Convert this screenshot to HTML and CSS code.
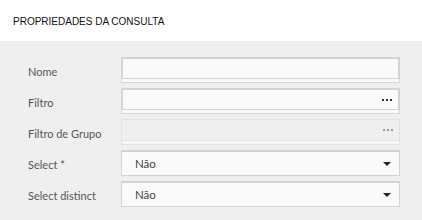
FILE: index.html
```html
<!DOCTYPE html>
<html lang="pt">
<head>
    <meta charset="UTF-8">
    <meta name="viewport" content="width=device-width, initial-scale=1.0">
    <title>Propriedades da Consulta</title>
    <link rel="stylesheet" href="styles.css">
</head>
<body>
    <!-- Cabeçalho do painel -->
    <header class="panel-header">
        <h1 class="panel-title">PROPRIEDADES DA CONSULTA</h1>
    </header>

    <!-- Formulário -->
    <div class="panel-body">
        <div class="form-row">
            <label class="form-label" for="nome">Nome</label>
            <div class="text-box">
                <input class="text-input" id="nome" type="text">
                <div class="text-strip"></div>
            </div>
        </div>

        <div class="form-row">
            <label class="form-label" for="filtro">Filtro</label>
            <div class="text-box">
                <div class="text-input with-dots">
                    <span class="dots"><i></i><i></i><i></i></span>
                </div>
                <div class="text-strip"></div>
            </div>
        </div>

        <div class="form-row">
            <label class="form-label">Filtro de Grupo</label>
            <div class="text-box disabled">
                <div class="text-input with-dots">
                    <span class="dots"><i></i><i></i><i></i></span>
                </div>
                <div class="text-strip"></div>
            </div>
        </div>

        <div class="form-row">
            <label class="form-label">Select *</label>
            <div class="select-box">
                <span class="select-value">Não</span>
                <span class="caret"></span>
            </div>
        </div>

        <div class="form-row">
            <label class="form-label">Select distinct</label>
            <div class="select-box">
                <span class="select-value">Não</span>
                <span class="caret"></span>
            </div>
        </div>
    </div>
</body>
</html>
```

FILE: styles.css
```css
body {
    margin: 0;
    width: 422px;
    height: 220px;
    overflow: hidden;
    background-color: #efefef;
    font-family: Lato, "Open Sans", sans-serif;
}

.panel-header {
    background-color: #fff;
    height: 41px;
    display: flex;
    align-items: center;
    padding: 0 13px;
    box-sizing: border-box;
}

.panel-title {
    margin: 0;
    font-family: "Liberation Sans", Arial, sans-serif;
    font-size: 10px;
    font-weight: normal;
    color: #111;
    padding-top: 1px;
}

.panel-body {
    padding: 16px 22px 0 28px;
    display: flex;
    flex-direction: column;
    gap: 5px;
}

.form-row {
    display: flex;
    align-items: center;
    height: 26px;
}

.form-label {
    width: 93px;
    font-size: 11px;
    color: #555;
    padding-top: 2px;
}

.text-box {
    width: 279px;
    height: 26px;
    display: flex;
    flex-direction: column;
}

.text-input {
    display: block;
    box-sizing: border-box;
    width: 100%;
    height: 22px;
    margin: 0;
    border: 2px solid #d3d3d3;
    border-bottom-width: 1px;
    background-color: #fafafa;
    outline: none;
}

.text-strip {
    height: 3px;
    border: 1px solid #d6d6d6;
    border-top: 0;
    background-color: #fafafa;
}

.with-dots {
    display: flex;
    align-items: center;
    justify-content: flex-end;
    padding-right: 6px;
}

.dots {
    display: flex;
    gap: 2px;
}

.dots i {
    width: 2px;
    height: 2px;
    background-color: #333;
}

.text-box.disabled .text-input {
    border-color: #e2e2e2;
    border-width: 1px;
    background-color: #efefef;
}

.text-box.disabled .text-strip {
    border-color: #e2e2e2;
    background-color: #f7f7f7;
}

.text-box.disabled .dots i {
    background-color: #999;
}

.select-box {
    width: 279px;
    height: 26px;
    box-sizing: border-box;
    border: 1px solid #d2d2d2;
    border-top-width: 2px;
    background-color: #fafafa;
    display: flex;
    align-items: center;
    justify-content: space-between;
    padding: 0 8px 0 13px;
}

.select-value {
    font-size: 11.5px;
    color: #444;
}

.caret {
    width: 0;
    height: 0;
    border-left: 4px solid transparent;
    border-right: 4px solid transparent;
    border-top: 4px solid #222;
}
```
